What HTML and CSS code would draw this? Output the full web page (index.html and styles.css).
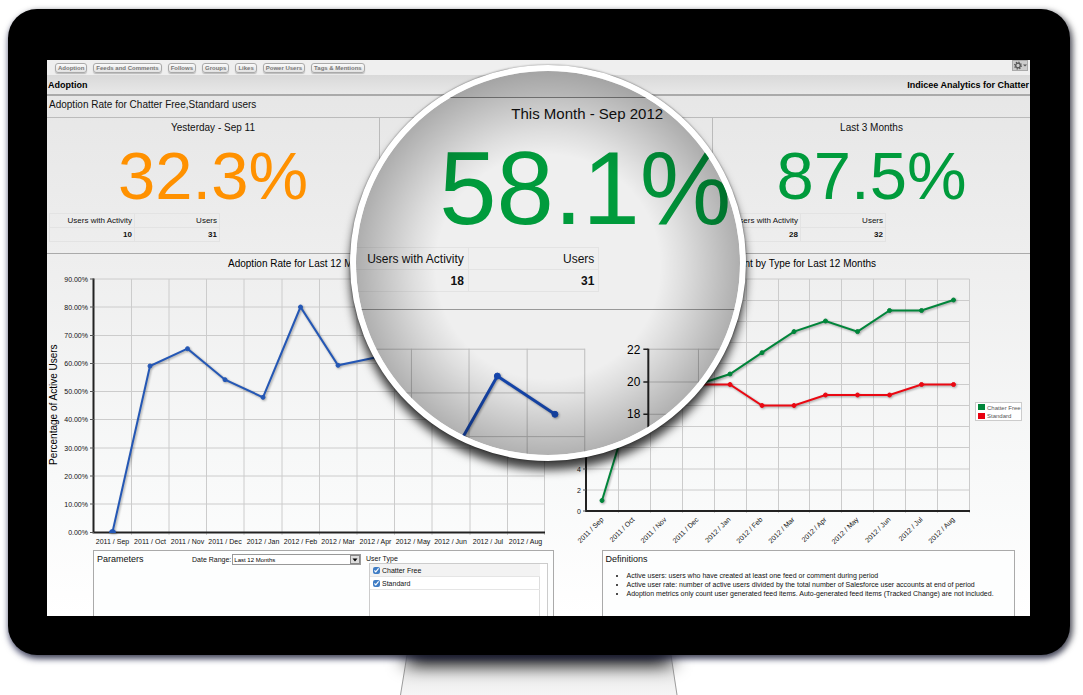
FILE: index.html
```
<!DOCTYPE html>
<html lang="en">
<head>
<meta charset="utf-8">
<title>Indicee Analytics for Chatter</title>
<link rel="stylesheet" href="styles.css">
</head>
<body>
<main class="monitor">
  <div class="screen">
    <nav class="toolbar">
      <button class="tab" type="button">Adoption</button>
      <button class="tab" type="button">Feeds and Comments</button>
      <button class="tab" type="button">Follows</button>
      <button class="tab" type="button">Groups</button>
      <button class="tab" type="button">Likes</button>
      <button class="tab" type="button">Power Users</button>
      <button class="tab" type="button">Tags &amp; Mentions</button>
      <button class="gear" type="button" aria-label="Settings">
        <svg width="14" height="9" viewBox="0 0 14 9"><circle cx="5" cy="4.500" r="2.300" fill="none" stroke="#555" stroke-width="1.300"/><circle cx="5" cy="4.500" r="3.400" fill="none" stroke="#555" stroke-width="1.200" stroke-dasharray="1.300 1.370"/><path d="M10 3.500h4l-2 2z" fill="#555"/></svg>
      </button>
    </nav>
    <header class="heading"><h1>Adoption</h1><strong>Indicee Analytics for Chatter</strong></header>
    <h2 class="subtitle">Adoption Rate for Chatter Free,Standard users</h2>

    <section class="metrics">
      <article class="metric">
        <h3>Yesterday - Sep 11</h3>
        <p class="rate orange">32.3%</p>
        <table class="counts"><tr><th>Users with Activity</th><th>Users</th></tr><tr><td>10</td><td>31</td></tr></table>
      </article>
      <article class="metric"></article>
      <article class="metric">
        <h3>Last 3 Months</h3>
        <p class="rate green">87.5%</p>
        <table class="counts"><tr><th>Users with Activity</th><th>Users</th></tr><tr><td>28</td><td>32</td></tr></table>
      </article>
    </section>

    <section class="charts">
      <svg class="chart" viewBox="47 254 517 296">
        <text class="chart-title" x="228" y="267">Adoption Rate for Last 12 Months</text>
        <text class="axis-title" transform="translate(57 465) rotate(-90)">Percentage of Active Users</text>
        <path class="grid" d="M94 279H545M94 307H545M94 335.500H545M94 363.500H545M94 391.500H545M94 419.500H545M94 448H545M94 476H545M94 504H545M131.500 279V535M169 279V535M206.500 279V535M244 279V535M282 279V535M319.500 279V535M357 279V535M394.500 279V535M432 279V535M470 279V535M507.500 279V535M544.500 279V535"/>
        <path class="axis" d="M93.500 278.500V532.500H545"/>
        <path class="tick" d="M90 279h4M90 307h4M90 335.500h4M90 363.500h4M90 391.500h4M90 419.500h4M90 448h4M90 476h4M90 504h4M90 532.500h4"/>
        <g class="label end">
          <text x="88" y="281.500">90.00%</text><text x="88" y="309.500">80.00%</text><text x="88" y="337.500">70.00%</text><text x="88" y="366">60.00%</text><text x="88" y="394">50.00%</text><text x="88" y="422">40.00%</text><text x="88" y="450.500">30.00%</text><text x="88" y="478.500">20.00%</text><text x="88" y="506.500">10.00%</text><text x="88" y="535">0.00%</text>
        </g>
        <g class="label middle">
          <text x="112.500" y="544">2011 / Sep</text><text x="150" y="544">2011 / Oct</text><text x="187.500" y="544">2011 / Nov</text><text x="225" y="544">2011 / Dec</text><text x="263" y="544">2012 / Jan</text><text x="300.500" y="544">2012 / Feb</text><text x="338" y="544">2012 / Mar</text><text x="375.500" y="544">2012 / Apr</text><text x="413" y="544">2012 / May</text><text x="450.500" y="544">2012 / Jun</text><text x="488" y="544">2012 / Jul</text><text x="525.500" y="544">2012 / Aug</text>
        </g>
        <g class="series blue">
          <polyline points="112.500,532 150,366 187.500,348.700 225,379.700 263,397.300 300.500,307 338,365.300 375.500,357.500 413,350"/>
          <path class="dot" d="M109.500 532.500a3 3 0 0 1 6 0z"/>
          <circle cx="150" cy="366" r="2"/><circle cx="187.500" cy="348.700" r="2"/><circle cx="225" cy="379.700" r="2"/><circle cx="263" cy="397.300" r="2"/><circle cx="300.500" cy="307" r="2"/><circle cx="338" cy="365.300" r="2"/>
        </g>
      </svg>
      <svg class="chart" viewBox="564 254 466 296">
        <text class="chart-title end" x="876" y="267">User Count by Type for Last 12 Months</text>
        <path class="grid" d="M586 279H969.500M586 300.500H969.500M586 321.500H969.500M586 342.500H969.500M586 363.500H969.500M586 384.500H969.500M586 405.500H969.500M586 426.500H969.500M586 447.500H969.500M586 469H969.500M586 490H969.500M618.500 279V513M650.500 279V513M682.500 279V513M714.500 279V513M746.500 279V513M778.500 279V513M809.500 279V513M841.500 279V513M873.500 279V513M905.500 279V513M937.500 279V513M969.500 279V513"/>
        <path class="axis" d="M586 279V511H970"/>
        <path class="tick" d="M583 469h3M583 490h3M583 511h3"/>
        <g class="label end">
          <text x="581" y="471.500">4</text><text x="581" y="492.500">2</text><text x="581" y="513.500">0</text>
          <text transform="translate(604 520) rotate(-45)">2011 / Sep</text><text transform="translate(635 520) rotate(-45)">2011 / Oct</text><text transform="translate(667 520) rotate(-45)">2011 / Nov</text><text transform="translate(699 520) rotate(-45)">2011 / Dec</text><text transform="translate(731 520) rotate(-45)">2012 / Jan</text><text transform="translate(763 520) rotate(-45)">2012 / Feb</text><text transform="translate(795 520) rotate(-45)">2012 / Mar</text><text transform="translate(827 520) rotate(-45)">2012 / Apr</text><text transform="translate(859 520) rotate(-45)">2012 / May</text><text transform="translate(891 520) rotate(-45)">2012 / Jun</text><text transform="translate(923 520) rotate(-45)">2012 / Jul</text><text transform="translate(955 520) rotate(-45)">2012 / Aug</text>
        </g>
        <g class="series red">
          <polyline points="698,384.500 730,384.500 762,405.500 794,405.500 825.500,395 857.500,395 889.500,395 921.500,384.500 953.500,384.500"/>
          <circle cx="730" cy="384.500" r="2"/><circle cx="762" cy="405.500" r="2"/><circle cx="794" cy="405.500" r="2"/><circle cx="825.500" cy="395" r="2"/><circle cx="857.500" cy="395" r="2"/><circle cx="889.500" cy="395" r="2"/><circle cx="921.500" cy="384.500" r="2"/><circle cx="953.500" cy="384.500" r="2"/>
        </g>
        <g class="series emerald">
          <polyline points="602,500.500 634,395 666,384.500 698,384.500 730,374 762,352.700 794,331.600 825.500,321 857.500,331.600 889.500,310.500 921.500,310.500 953.500,300"/>
          <circle cx="602" cy="500.500" r="2"/><circle cx="730" cy="374" r="2"/><circle cx="762" cy="352.700" r="2"/><circle cx="794" cy="331.600" r="2"/><circle cx="825.500" cy="321" r="2"/><circle cx="857.500" cy="331.600" r="2"/><circle cx="889.500" cy="310.500" r="2"/><circle cx="921.500" cy="310.500" r="2"/><circle cx="953.500" cy="300" r="2"/>
        </g>
        <rect x="975.500" y="402.500" width="46" height="18" fill="#fff" stroke="#ccc"/>
        <rect x="978" y="404" width="7" height="6" fill="#00863a"/><rect x="978" y="413" width="7" height="6" fill="#e8000f"/>
        <g class="legend"><text x="987" y="409.500">Chatter Free</text><text x="987" y="418">Standard</text></g>
      </svg>
    </section>

    <section class="panels">
      <form class="panel params">
        <h3>Parameters</h3>
        <div class="range">
          <label for="range">Date Range:</label>
          <span class="picker"><select id="range"><option>Last 12 Months</option></select><svg class="arrow" width="10" height="9" viewBox="0 0 10 9"><rect x=".5" y=".5" width="9" height="8" fill="#ddd" stroke="#888"/><path d="M2.500 3.500h5L5 6.500z"/></svg></span>
        </div>
        <fieldset class="types">
          <legend>User Type</legend>
          <div class="list">
            <label class="row shaded"><input type="checkbox" checked>Chatter Free</label>
            <label class="row"><input type="checkbox" checked>Standard</label>
          </div>
        </fieldset>
      </form>
      <article class="panel defs">
        <h3>Definitions</h3>
        <ul>
          <li>Active users: users who have created at least one feed or comment during period</li>
          <li>Active user rate: number of active users divided by the total number of Salesforce user accounts at end of period</li>
          <li>Adoption metrics only count user generated feed items. Auto-generated feed items (Tracked Change) are not included.</li>
        </ul>
      </article>
    </section>

    <aside class="lens">
      <div class="lens-top"></div>
      <h3>This Month - Sep 2012</h3>
      <p class="rate green">58.1%</p>
      <table class="counts"><tr><th>Users with Activity</th><th>Users</th></tr><tr><td>18</td><td>31</td></tr></table>
      <svg class="lens-chart" width="384" height="147" viewBox="356 309 384 147">
        <path class="grid" d="M356 348.500H585M356 392.500H585M356 436.500H585M410.500 348V456M468.500 348V456M527 348V456M585 348V456M649 348.500H740M649 381.500H740M649 414H740M699.500 348V456"/>
        <path d="M649 348V456" stroke="#222" stroke-width="2"/>
        <path d="M644 348.500h5M644 381.500h5M644 414h5" stroke="#222" stroke-width="1.500"/>
        <g class="lens-label"><text x="641" y="353">22</text><text x="641" y="385.500">20</text><text x="641" y="418">18</text></g>
        <g class="series navy"><polyline points="438,480 497,375.500 555,414"/><circle cx="497" cy="375.500" r="3"/><circle cx="555" cy="414" r="3"/></g>
      </svg>
    </aside>
  </div>
</main>
<svg class="stand" viewBox="380 655 318 40" width="318" height="40" aria-hidden="true">
  <defs>
    <linearGradient id="fall" x1="0" y1="0" x2="0" y2="1"><stop offset="0" stop-color="#e2e2e2"/><stop offset="1" stop-color="#f6f6f6"/></linearGradient>
    <filter id="soft" x="-20%" y="-100%" width="140%" height="300%"><feGaussianBlur stdDeviation="10 8"/></filter>
  </defs>
  <path d="M407 655H671L677.500 695H400z" fill="url(#fall)"/>
  <path d="M407 640H671V667H407z" fill="#000" fill-opacity=".8" filter="url(#soft)"/>
  <path d="M407 655L400.500 695M671 655L677 695" stroke="#777" stroke-width=".7"/>
</svg>
</body>
</html>
```
FILE: styles.css
```
* { box-sizing: border-box; }
body {
  margin: 0;
  padding: 9px 13px 0 8px;
  background: #fff;
  color: #111;
  font-family: "Liberation Sans", Arial, sans-serif;
  overflow: hidden;
}
h1, h2, h3, p, ul { margin: 0; padding: 0; font-weight: normal; }
button { font-family: inherit; }

.monitor {
  position: relative;
  z-index: 1;
  padding: 51px 40px 39px 39px;
  border-radius: 29px;
  background: #000;
  box-shadow: 3px 2px 6px rgba(0, 0, 0, .5), 0 4px 6px rgba(35, 40, 90, .6);
}
.screen {
  position: relative;
  background: linear-gradient(#e5e5e5, #eee 35%, #f8f9f9 75%, #fff);
}

.toolbar {
  display: flex;
  gap: 6px;
  align-items: center;
  height: 15px;
  padding: 0 2px 0 8px;
  background: #efefef;
}
.tab {
  height: 10px;
  margin-top: 1px;
  padding: 0 2px;
  border: 1px solid #aaa;
  border-radius: 3px;
  background: linear-gradient(#fafafa, #e2e2e2);
  color: #777;
  font-size: 6px;
  font-weight: bold;
  line-height: 8px;
  box-shadow: 0 1px 1px #bbb;
}
.gear {
  display: flex;
  align-self: flex-start;
  height: 11px;
  margin-left: auto;
  padding: 0;
  border: 1px solid #aaa;
  background: #ccc;
}
.heading {
  display: flex;
  justify-content: space-between;
  height: 21px;
  padding: 0 1px;
  border-bottom: 2px solid #aaa;
  background: linear-gradient(#d9d9d9, #e8e8e8);
  color: #000;
  font-size: 9px;
  line-height: 20px;
}
.heading h1 { font-size: 9px; font-weight: bold; }
.subtitle {
  height: 22px;
  padding-left: 2px;
  border-bottom: 1px solid #bbb;
  font-size: 10px;
  line-height: 18px;
}

.metrics {
  display: grid;
  grid-template-columns: 332fr 333fr 318fr;
  height: 136px;
  border-bottom: 1px solid #aaa;
}
.metric + .metric { border-left: 1px solid #bbb; }
.metric h3 { font-size: 10px; line-height: 20px; text-align: center; }
.rate { font-size: 67px; line-height: 75px; text-align: center; }
.orange { color: #ff9100; }
.green { color: #009b3c; }
.counts { border-collapse: collapse; table-layout: fixed; }
.counts th, .counts td { border: 1px solid #e3e3e3; text-align: right; }
.counts th { font-weight: normal; }
.counts td { font-weight: bold; }
.metric .counts { width: 171px; margin-left: 2px; font-size: 8px; }
.metric th, .metric td { height: 14px; padding: 0 2px; line-height: 13px; white-space: nowrap; }

.charts { display: grid; grid-template-columns: 517fr 466fr; }
.chart { display: block; width: 100%; }
.chart-title { font-size: 10px; }
.axis-title { font-size: 10px; }
.grid { fill: none; stroke: #ccc; }
.axis { fill: none; stroke: #222; stroke-width: 2; }
.tick { stroke: #555; }
.label { font-size: 7px; fill: #111; }
.end { text-anchor: end; }
.middle { text-anchor: middle; }
.legend { font-size: 6px; fill: #555; }
.series { filter: drop-shadow(1px 1px 1px rgba(0, 0, 0, .35)); }
.series polyline { fill: none; stroke: currentColor; stroke-width: 2; }
.series circle, .dot { fill: currentColor; stroke: currentColor; }
.blue { color: #2457b5; }
.navy { color: #1546ae; }
.red { color: #ea0812; }
.emerald { color: #00853a; }

.panels {
  display: grid;
  grid-template-columns: 460fr 413fr;
  column-gap: 48px;
  min-height: 66px;
  padding: 0 15px 0 46px;
}
.panel {
  border: 1px solid #aaa;
  border-bottom: 0;
  background: #fdfefe;
  font-size: 7px;
}
.panel h3 { font-size: 9px; line-height: 17px; }
.params { display: flex; padding: 0 5px 0 3px; }
.params h3 { width: 95px; }
.range { display: flex; gap: 1px; height: 17px; align-items: center; width: 169px; }
.picker { position: relative; flex: 1; height: 11px; }
.picker select {
  display: block;
  width: 100%;
  height: 11px;
  padding: 0 1px;
  border: 1px solid #999;
  border-radius: 0;
  background: #fff;
  appearance: none;
  font: 6px "Liberation Sans", Arial, sans-serif;
}
.arrow { position: absolute; top: 1px; right: 1px; }
.types { display: flex; flex: 1; flex-direction: column; margin: 0; padding: 0 0 0 8px; border: 0; min-width: 0; }
.types legend { padding: 0; margin-left: -3px; line-height: 9px; padding-top: 3px; }
.list {
  height: 53px;
  padding-right: 7px;
  border: 1px solid #ccc;
  border-bottom: 0;
  background: linear-gradient(#ddd, #ddd) right 7px top / 1px 100% no-repeat #fff;
}
.row { display: flex; align-items: center; gap: 2px; height: 13px; padding-left: 3px; border-bottom: 1px solid #e5e5e5; }
.shaded { background: #f3f3f3; }
.row input {
  width: 7px;
  height: 7px;
  margin: 0;
  accent-color: #3f7cc4;
}
.defs { padding-left: 3px; }
.defs ul { margin: 3px 0 0; padding-left: 21px; line-height: 9px; white-space: nowrap; }

.lens {
  position: absolute;
  top: 5px;
  left: 51%;
  width: 396px;
  height: 396px;
  margin-left: -198px;
  border: 6px solid #fff;
  border-radius: 50%;
  background: #efefef;
  overflow: hidden;
  box-shadow: 0 0 2px rgba(0, 0, 0, .5), 0 9px 10px rgba(0, 0, 0, .75);
}
.lens::after {
  content: "";
  position: absolute;
  inset: 0;
  border-radius: 50%;
  background: radial-gradient(circle at 50% 51%, transparent 112px, rgba(0, 0, 0, .07) 135px, rgba(0, 0, 0, .28) 194px);
}
.lens-top { height: 27px; border-bottom: 1px solid #888; background: #e5e5e5; }
.lens h3 { padding-left: 155px; font-size: 15px; line-height: 32px; white-space: nowrap; }
.lens .rate { padding-left: 83px; font-size: 103px; line-height: 117px; text-align: left; }
.lens .counts { width: 262px; margin-left: -19px; font-size: 12px; }
.lens th, .lens td { height: 22px; padding: 0 4px; white-space: nowrap; }
.lens-chart { display: block; margin-top: 17px; border-top: 1px solid #999; }
.lens .grid { stroke: #bcbcbc; stroke-width: 1; }
.lens-label { font-size: 12px; text-anchor: end; }
.lens polyline { stroke-width: 3; }

.stand { display: block; margin: 0 auto; }
```
